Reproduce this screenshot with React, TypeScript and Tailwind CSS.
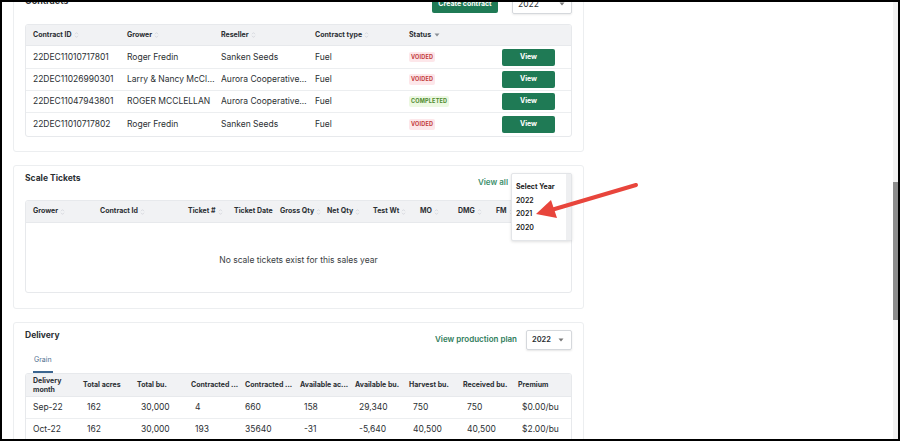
import React from 'react'

const green = 'bg-[#1f7a55]'

const SortIcon = () => (
  <svg width="5" height="8" viewBox="0 0 5 8" className="ml-[2px] shrink-0">
    <path d="M1 3.2 L2.5 1.6 L4 3.2" stroke="#d3d6db" strokeWidth="0.8" fill="none" />
    <path d="M1 4.8 L2.5 6.4 L4 4.8" stroke="#d3d6db" strokeWidth="0.8" fill="none" />
  </svg>
)

const Caret = ({ color = '#777' }: { color?: string }) => (
  <svg width="6" height="4" viewBox="0 0 6 4">
    <path d="M0.5 0.5 L5.5 0.5 L3 3.5 Z" fill={color} />
  </svg>
)

const Badge = ({ status }: { status: string }) =>
  status === 'COMPLETED' ? (
    <span className="bg-[#ecf8e2] text-[#4d8a2c] text-[5.5px] font-bold px-[2px] py-[1px] rounded-[2px] tracking-[0.2px]">COMPLETED</span>
  ) : (
    <span className="bg-[#fde7ea] text-[#c23a3a] text-[5.5px] font-bold px-[2px] py-[1px] rounded-[2px] tracking-[0.2px]">VOIDED</span>
  )

const contracts = [
  { id: '22DEC11010717801', grower: 'Roger Fredin', reseller: 'Sanken Seeds', type: 'Fuel', status: 'VOIDED', h: 'h-[23px]' },
  { id: '22DEC11026990301', grower: 'Larry & Nancy McClellan', reseller: 'Aurora Cooperative Elevator', type: 'Fuel', status: 'VOIDED', h: 'h-[22px]' },
  { id: '22DEC11047943801', grower: 'ROGER MCCLELLAN', reseller: 'Aurora Cooperative Elevator', type: 'Fuel', status: 'COMPLETED', h: 'h-[22px]' },
  { id: '22DEC11010717802', grower: 'Roger Fredin', reseller: 'Sanken Seeds', type: 'Fuel', status: 'VOIDED', h: 'h-[23px]' },
]

const scaleCols = [
  { label: 'Grower', w: 'w-[67px]', sort: true },
  { label: 'Contract Id', w: 'w-[88px]', sort: true },
  { label: 'Ticket #', w: 'w-[46px]', sort: true },
  { label: 'Ticket Date', w: 'w-[46px]', sort: false },
  { label: 'Gross Qty', w: 'w-[47px]', sort: true },
  { label: 'Net Qty', w: 'w-[46px]', sort: true },
  { label: 'Test Wt', w: 'w-[47px]', sort: true },
  { label: 'MO', w: 'w-[38px]', sort: true },
  { label: 'DMG', w: 'w-[38px]', sort: true },
  { label: 'FM', w: 'w-[30px]', sort: true },
]

const deliveryCols = [
  { label: 'Delivery month', w: 'w-[50px]' },
  { label: 'Total acres', w: 'w-[54px]' },
  { label: 'Total bu.', w: 'w-[54px]' },
  { label: 'Contracted ...', w: 'w-[54px]' },
  { label: 'Contracted ...', w: 'w-[55px]' },
  { label: 'Available ac...', w: 'w-[55px]' },
  { label: 'Available bu.', w: 'w-[54px]' },
  { label: 'Harvest bu.', w: 'w-[54px]' },
  { label: 'Received bu.', w: 'w-[55px]' },
  { label: 'Premium', w: 'w-[50px]' },
]

const deliveryRows = [
  ['Sep-22', '162', '30,000', '4', '660', '158', '29,340', '750', '750', '$0.00/bu'],
  ['Oct-22', '162', '30,000', '193', '35640', '-31', '-5,640', '40,500', '40,500', '$2.00/bu'],
]

const App = () => {
  return (
    <div className="relative w-[900px] h-[441px] border-2 border-black overflow-hidden flex bg-white font-['Inter',sans-serif] text-[#2b2f33]">
      <main className="flex-1 overflow-hidden pl-[11px]">
        {/* Contracts */}
        <section className="w-[571px] -mt-[25px] border border-[#eceef0] rounded-[3px] px-[11px] pt-[12px] pb-[14px]">
          <div className="flex justify-between h-[24px]">
            <h2 className="text-[9px] font-bold leading-[12px] mt-[5px]">Contracts</h2>
            <div className="flex items-start gap-[14px]">
              <button className={`${green} text-white text-[7px] font-bold h-[17px] w-[66px] mt-[6px] rounded-[2px]`}>Create contract</button>
              <div className="w-[60px] h-[20px] mt-[4px] border border-[#d5d8dc] rounded-[2px] shadow-[0_1px_2px_rgba(0,0,0,0.08)] flex items-center justify-between pl-[5px] pr-[6px]">
                <span className="text-[8.5px]">2022</span>
                <Caret />
              </div>
            </div>
          </div>
          <div className="mt-[10px] border border-[#e7e9ec] rounded-[3px] overflow-hidden">
            <div className="flex items-center h-[21px] bg-[#f1f2f4] pl-[7px] text-[7px] font-bold border-b border-[#e7e9ec]">
              <div className="w-[94px] flex items-center">Contract ID<SortIcon /></div>
              <div className="w-[94px] flex items-center">Grower<SortIcon /></div>
              <div className="w-[94px] flex items-center">Reseller<SortIcon /></div>
              <div className="w-[94px] flex items-center">Contract type<SortIcon /></div>
              <div className="w-[94px] flex items-center gap-[3px]">Status<Caret color="#8a8f96" /></div>
            </div>
            {contracts.map((c, i) => (
              <div key={c.id} className={`flex items-center ${c.h} pl-[7px] text-[8.5px] ${i < 3 ? 'border-b border-[#eceef0]' : ''}`}>
                <div className="w-[94px] shrink-0 pr-[4px]">{c.id}</div>
                <div className="w-[94px] shrink-0 pr-[6px]"><div className="truncate">{c.grower}</div></div>
                <div className="w-[94px] shrink-0 pr-[8px]"><div className="truncate">{c.reseller}</div></div>
                <div className="w-[94px] shrink-0">{c.type}</div>
                <div className="w-[93px] shrink-0 flex items-center"><Badge status={c.status} /></div>
                <button className={`${green} text-white text-[7px] font-bold w-[53px] h-[17px] rounded-[2px]`}>View</button>
              </div>
            ))}
          </div>
        </section>

        {/* Scale Tickets */}
        <section className="relative w-[571px] mt-[13px] border border-[#eceef0] rounded-[3px] px-[11px] pt-[6px] pb-[15px]">
          <div className="flex justify-between h-[22px]">
            <h2 className="text-[8.5px] font-bold leading-[12px]">Scale Tickets</h2>
            <a className="text-[8px] font-semibold text-[#3b8f6b] leading-[12px] mt-[4px] mr-[64px]">View all</a>
          </div>
          <div className="mt-[6px] border border-[#e7e9ec] rounded-[3px] overflow-hidden">
            <div className="flex items-center h-[22px] bg-[#f1f2f4] pl-[7px] text-[7px] font-bold border-b border-[#e7e9ec]">
              {scaleCols.map((c) => (
                <div key={c.label} className={`${c.w} flex items-center shrink-0`}>
                  {c.label}
                  {c.sort && <SortIcon />}
                </div>
              ))}
            </div>
            <div className="h-[69px] flex items-center justify-center pt-[5px] text-[8.5px] text-[#3a3e43]">
              No scale tickets exist for this sales year
            </div>
          </div>

          {/* year dropdown open */}
          <div className="absolute right-[11px] top-[7px] w-[61px] h-[68px] bg-white border border-[#e3e5e8] rounded-[2px] shadow-[0_1px_3px_rgba(0,0,0,0.12)] flex">
            <div className="flex-1 pl-[4px] pt-[8px] text-[7px] font-semibold text-[#222] flex flex-col gap-[3.5px] leading-[10px]">
              <span className="font-bold">Select Year</span>
              <span>2022</span>
              <span>2021</span>
              <span>2020</span>
            </div>
            <div className="w-[5px] bg-[#eeeff1]" />
          </div>
        </section>

        {/* Delivery */}
        <section className="w-[571px] mt-[13px] border border-[#eceef0] rounded-[3px] px-[11px] pt-[6px] pb-[15px]">
          <div className="flex justify-between h-[21px]">
            <h2 className="text-[8.5px] font-bold leading-[12px]">Delivery</h2>
            <div className="flex items-start gap-[9px]">
              <a className="text-[8px] font-semibold text-[#2f7d5b] leading-[12px] mt-[4px]">View production plan</a>
              <div className="w-[46px] h-[20px] mt-[1px] border border-[#d5d8dc] rounded-[2px] shadow-[0_1px_2px_rgba(0,0,0,0.1)] flex items-center justify-between pl-[5px] pr-[7px]">
                <span className="text-[7.5px] font-semibold">2022</span>
                <Caret />
              </div>
            </div>
          </div>
          <div className="flex pl-[8px] mt-[4px]">
            <span className="text-[7px] text-[#4f6f8f] leading-[12px] pb-[5px] border-b-2 border-[#3b6590] px-[1px]">Grain</span>
          </div>
          <div className="border border-[#e7e9ec] rounded-[3px] overflow-hidden">
            <div className="flex items-center h-[23px] bg-[#f1f2f4] pl-[7px] text-[7px] font-bold border-b border-[#e7e9ec] leading-[9.5px]">
              {deliveryCols.map((c, i) => (
                <div key={i} className={`${c.w} shrink-0 pr-[4px] ${i === 0 ? '' : 'whitespace-nowrap'}`}>{c.label}</div>
              ))}
            </div>
            {deliveryRows.map((r, ri) => (
              <div key={ri} className="flex items-center h-[22px] pl-[7px] text-[8.5px] border-b border-[#eceef0]">
                {r.map((v, i) => (
                  <div key={i} className={`${deliveryCols[i].w} shrink-0 ${i === 0 || i === 4 ? '' : 'pl-[4px]'}`}>{v}</div>
                ))}
              </div>
            ))}
          </div>
        </section>
      </main>

      {/* scrollbar */}
      <div className="w-[5px] bg-[#f1f1f1]">
        <div className="mt-[180px] h-[138px] bg-[#8c8c8c]" />
      </div>

      {/* annotation arrow */}
      <svg className="absolute left-[-2px] top-[-2px] pointer-events-none" width="900" height="441" viewBox="0 0 900 441">
        <line x1="636" y1="185" x2="553" y2="209.5" stroke="#e8453c" strokeWidth="4" strokeLinecap="round" />
        <polygon points="536,214 551,200 557,218" fill="#e8453c" />
      </svg>
    </div>
  )
}

export default App
